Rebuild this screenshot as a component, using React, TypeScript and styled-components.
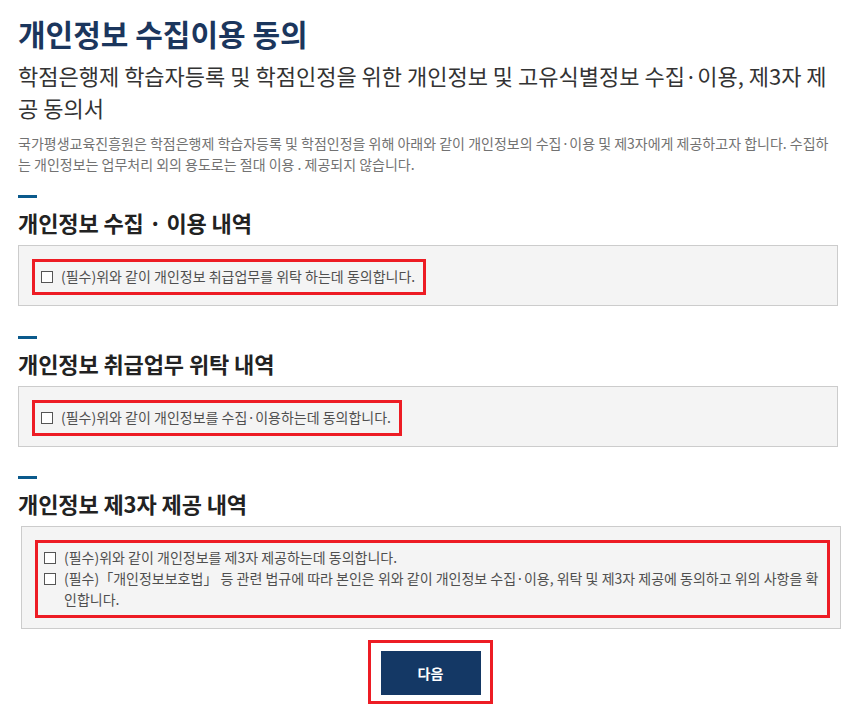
import React from "react";
import styled, { createGlobalStyle } from "styled-components";

const Global = createGlobalStyle`
  html, body { margin: 0; padding: 0; background: #fff; }
  body { font-family: "Noto Sans CJK KR", "Noto Sans", sans-serif; }
  * { box-sizing: border-box; }
`;

const Page = styled.div`
  padding: 13px 22px 0 18px;
`;

const Title = styled.h1`
  margin: 0;
  font-size: 30px;
  line-height: 40px;
  font-weight: 700;
  color: #1b365d;
`;

const Subtitle = styled.h2`
  margin: 6px 0 0;
  font-size: 22px;
  line-height: 32px;
  font-weight: 400;
  color: #333;
  word-break: break-all;
`;

const Desc = styled.p`
  margin: 10px 0 0;
  font-size: 14px;
  line-height: 21px;
  color: #727272;
  letter-spacing: 0;
  word-break: break-all;
`;

const Section = styled.section<{ $top: number }>`
  margin-top: ${(p) => p.$top}px;
`;

const Bar = styled.div`
  width: 19px;
  height: 3px;
  background: #0b5a8c;
`;

const Heading = styled.h3`
  margin: 9px 0 0;
  font-size: 22px;
  line-height: 30px;
  font-weight: 700;
  color: #222;
  letter-spacing: -0.1px;
`;

const Box = styled.div<{ $shift?: number }>`
  display: flex;
  flex-direction: column;
  align-items: flex-start;
  margin: 8px 0 0 ${(p) => p.$shift ?? 0}px;
  width: 820px;
  background: #f4f4f4;
  border: 1px solid #cccccc;
  padding: 13px 10px 10px 13px;
`;

const Highlight = styled.div<{ $full?: boolean }>`
  align-self: ${(p) => (p.$full ? "stretch" : "flex-start")};
  border: 3px solid #ed1c24;
  padding: 4px 8px 5px 6px;
`;

const Row = styled.label`
  display: flex;
  align-items: flex-start;
  gap: 8px;
  font-size: 14px;
  line-height: 21px;
  color: #4f4f4f;
`;

const Check = styled.input.attrs({ type: "checkbox" })`
  appearance: none;
  -webkit-appearance: none;
  flex: none;
  width: 12px;
  height: 12px;
  margin: 5px 0 0;
  border: 1px solid #555;
  background: #fff;
`;

const RowText = styled.span`
  flex: 1;
  word-break: break-all;
`;

const Actions = styled.div`
  display: flex;
  justify-content: center;
  margin-top: 11px;
  padding-left: 5px;
`;

const ButtonFrame = styled.div`
  border: 3px solid #ed1c24;
  padding: 8px 9px 6px 10px;
`;

const NextButton = styled.button`
  display: block;
  width: 100px;
  height: 44px;
  border: 0;
  background: #143865;
  color: #fff;
  font-family: inherit;
  font-size: 14px;
  font-weight: 700;
  cursor: pointer;
`;

const CheckRow = ({ children }: { children: React.ReactNode }) => (
  <Row>
    <Check />
    <RowText>{children}</RowText>
  </Row>
);

export default function App() {
  return (
    <>
      <Global />
      <Page>
        <Title>개인정보 수집이용 동의</Title>
        <Subtitle>
          학점은행제 학습자등록 및 학점인정을 위한 개인정보 및 고유식별정보 수집·이용, 제3자 제공 동의서
        </Subtitle>
        <Desc>
          국가평생교육진흥원은 학점은행제 학습자등록 및 학점인정을 위해 아래와 같이 개인정보의 수집·이용 및 제3자에게 제공하고자 합니다. 수집하는 개인정보는 업무처리 외의 용도로는 절대 이용 . 제공되지 않습니다.
        </Desc>

        <Section $top={20}>
          <Bar />
          <Heading>개인정보 수집 · 이용 내역</Heading>
          <Box>
            <Highlight>
              <CheckRow>(필수)위와 같이 개인정보 취급업무를 위탁 하는데 동의합니다.</CheckRow>
            </Highlight>
          </Box>
        </Section>

        <Section $top={30}>
          <Bar />
          <Heading>개인정보 취급업무 위탁 내역</Heading>
          <Box>
            <Highlight>
              <CheckRow>(필수)위와 같이 개인정보를 수집·이용하는데 동의합니다.</CheckRow>
            </Highlight>
          </Box>
        </Section>

        <Section $top={29}>
          <Bar />
          <Heading>개인정보 제3자 제공 내역</Heading>
          <Box $shift={3}>
            <Highlight $full>
              <CheckRow>(필수)위와 같이 개인정보를 제3자 제공하는데 동의합니다.</CheckRow>
              <CheckRow>
                (필수)「개인정보보호법」 등 관련 법규에 따라 본인은 위와 같이 개인정보 수집·이용, 위탁 및 제3자 제공에 동의하고 위의 사항을 확인합니다.
              </CheckRow>
            </Highlight>
          </Box>
        </Section>

        <Actions>
          <ButtonFrame>
            <NextButton>다음</NextButton>
          </ButtonFrame>
        </Actions>
      </Page>
    </>
  );
}
